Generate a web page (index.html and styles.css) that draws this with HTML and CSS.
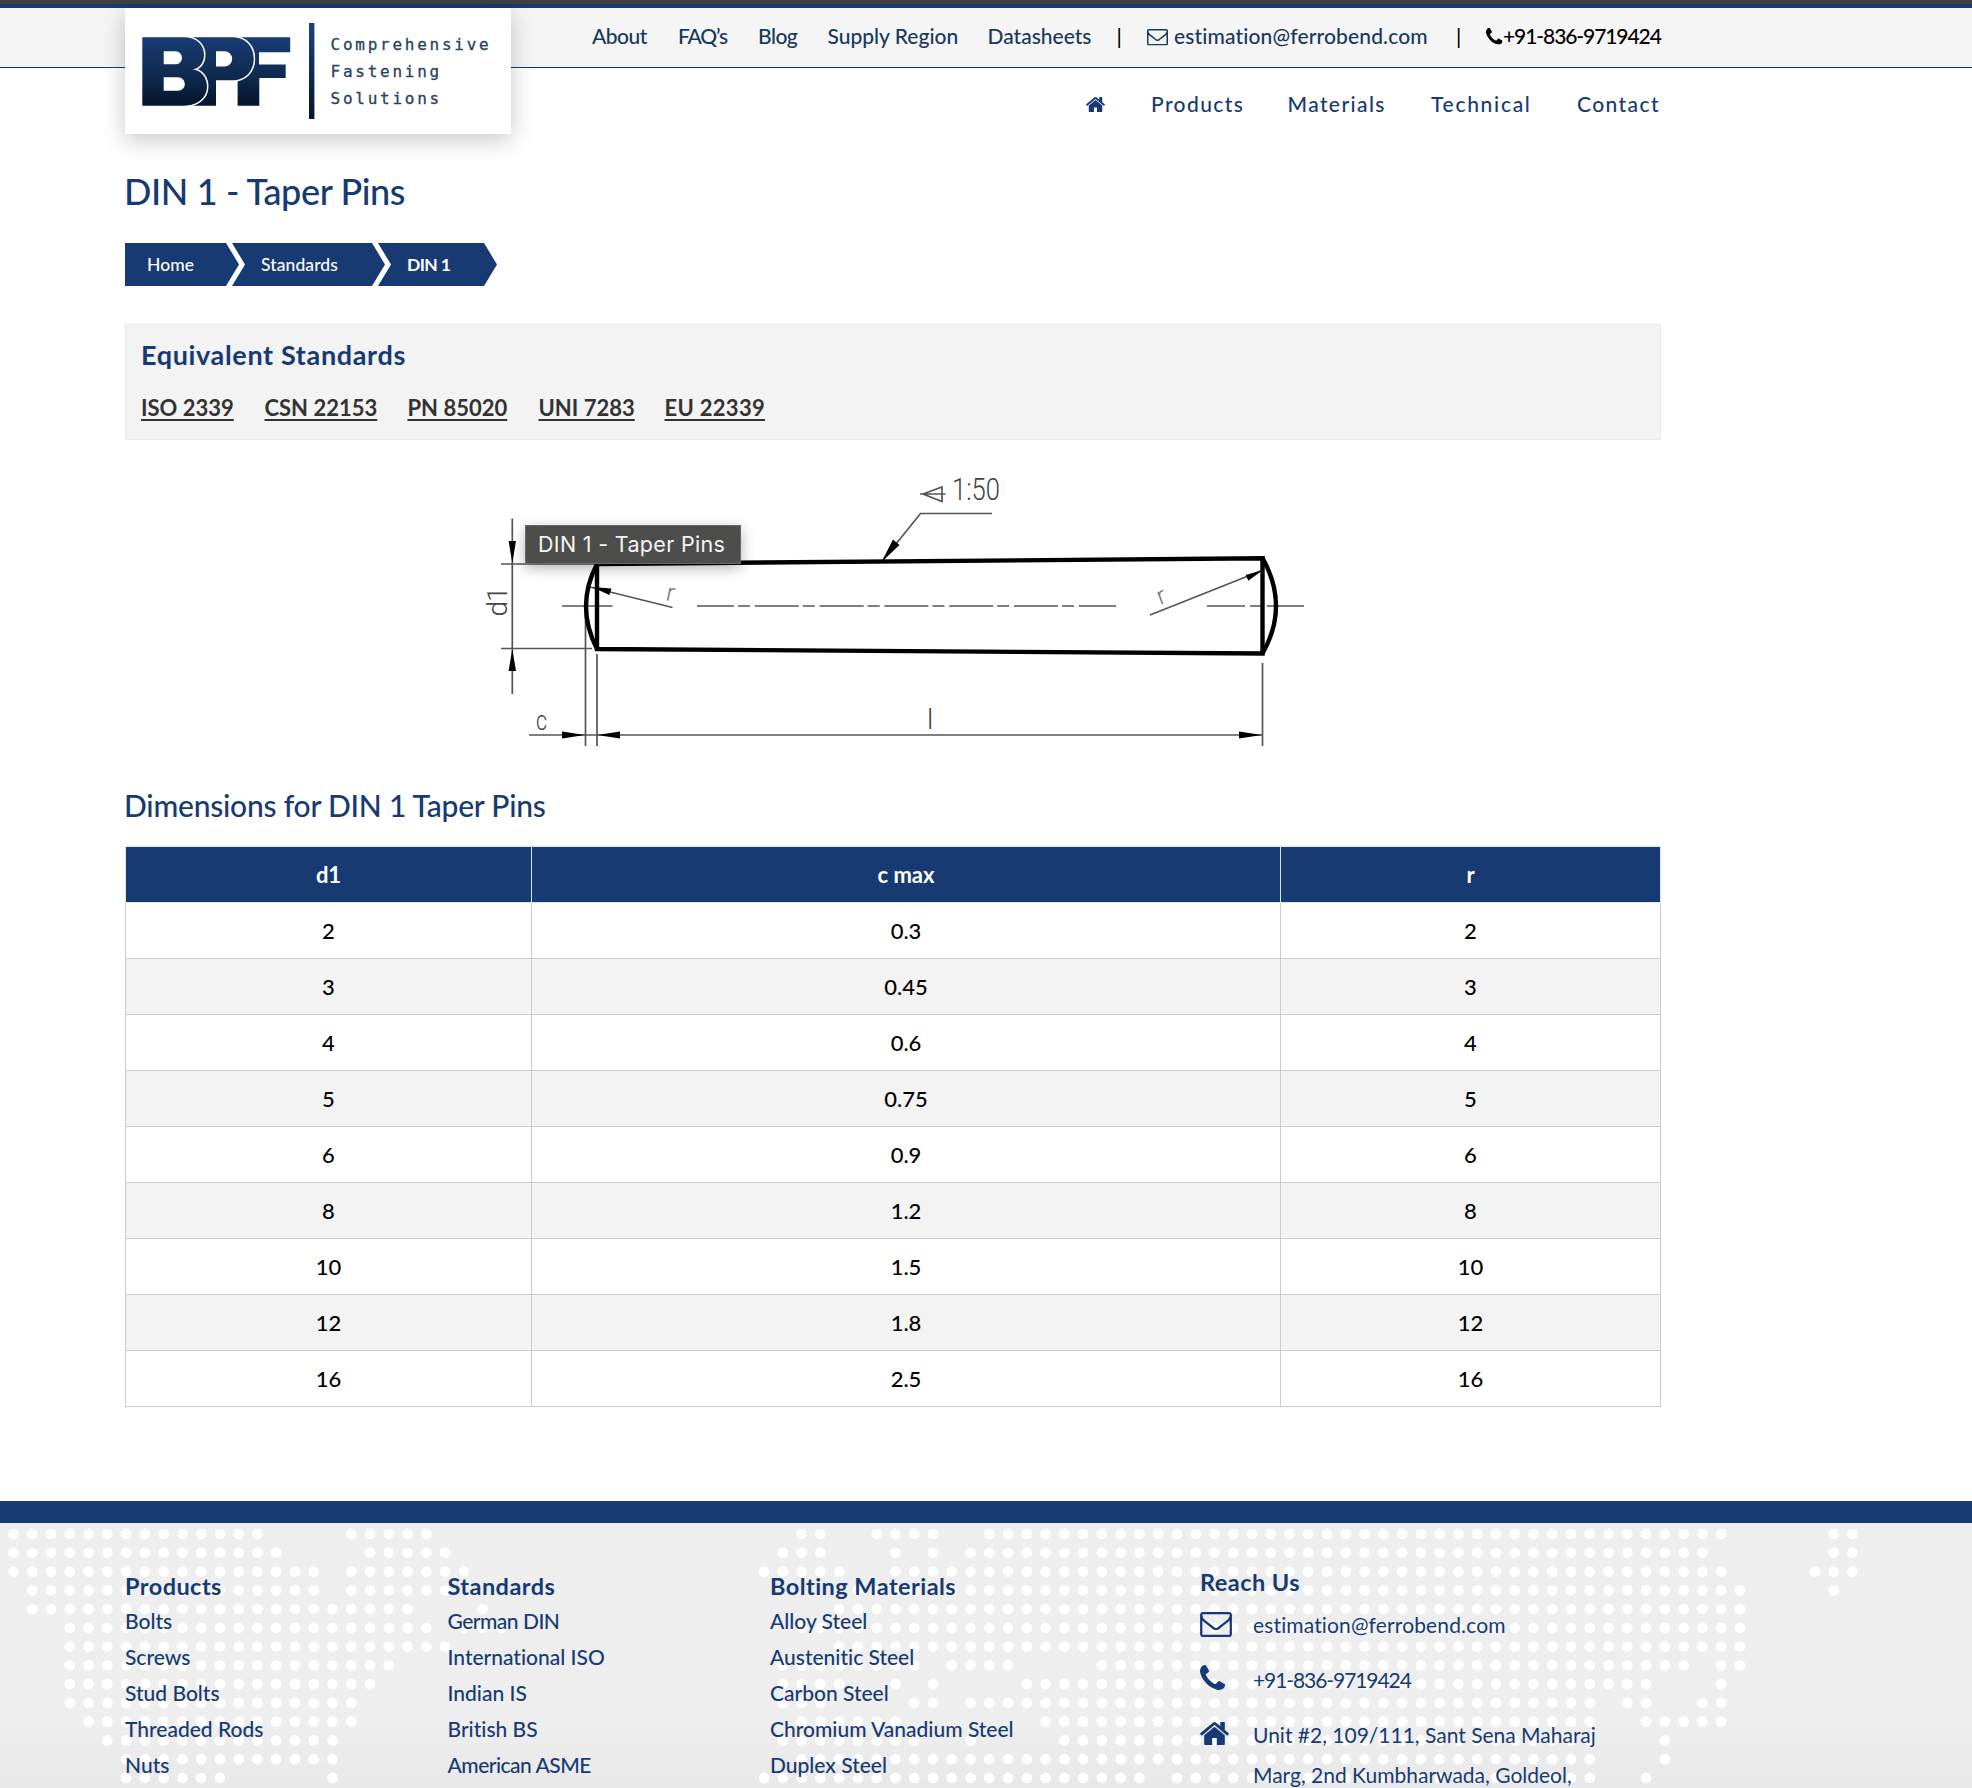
FILE: index.html
```
<!DOCTYPE html>
<html lang="en">
<head>
<meta charset="utf-8">
<title>DIN 1 - Taper Pins</title>
<link rel="stylesheet" href="styles.css">
</head>
<body>
<svg class="sprite" aria-hidden="true">
  <symbol id="i-home" viewBox="89 253 1614 1283"><path d="M1472 992v480q0 26-19 45t-45 19h-384v-384h-256v384h-384q-26 0-45-19t-19-45v-480q0-1 .5-3t.5-3l575-474 575 474q1 2 1 6zm223-69l-62 74q-8 9-21 11h-3q-13 0-21-7l-692-577-692 577q-12 8-24 7-13-2-21-11l-62-74q-8-10-7-23.5t11-21.5l719-599q32-26 76-26t76 26l244 204v-195q0-14 9-23t23-9h192q14 0 23 9t9 23v408l219 182q10 8 11 21.5t-7 23.5z"/></symbol>
  <symbol id="i-mail" viewBox="0 256 1792 1408"><path d="M1664 1504v-768q-32 36-69 66-268 206-426 338-51 43-83 67t-86.5 48.5-102.5 24.5h-2q-48 0-102.5-24.5t-86.5-48.5-83-67q-158-132-426-338-37-30-69-66v768q0 13 9.5 22.5t22.5 9.5h1472q13 0 22.5-9.5t9.5-22.5zm0-1051v-24.5l-.5-13-3-12.5-5.5-9-9-7.5-14-2.5h-1472q-13 0-22.5 9.5t-9.5 22.5q0 168 147 284 193 152 401 317 6 5 35 29.5t46 37.5 44.5 31.5 50.5 27.5 43 9h2q20 0 43-9t50.5-27.5 44.5-31.5 46-37.5 35-29.5q208-165 401-317 54-43 100.5-115.5t46.5-131.5zm128-37v1088q0 66-47 113t-113 47h-1472q-66 0-113-47t-47-113v-1088q0-66 47-113t113-47h1472q66 0 113 47t47 113z"/></symbol>
  <symbol id="i-phone" viewBox="192 128 1408 1408"><path d="M1600 1240q0 27-10 70.5t-21 68.5q-21 50-122 106-94 51-186 51-27 0-53-3.5t-57.5-12.5-47-14.5-55.5-20.5-49-18q-98-35-175-83-127-79-264-216t-216-264q-48-77-83-175-3-9-18-49t-20.5-55.5-14.5-47-12.5-57.5-3.5-53q0-92 51-186 56-101 106-122 25-11 68.5-21t70.5-10q14 0 21 3 18 6 53 76 11 19 30 54t35 63.5 31 53.5q3 4 17.5 25t21.5 35.5 7 28.5q0 20-28.5 50t-62 55-62 53-28.5 46q0 9 5 22.5t8.5 20.5 14 24 11.5 19q76 137 174 235t235 174q2 1 19 11.5t24 14 20.5 8.5 22.5 5q18 0 46-28.5t53-62 55-62 50-28.5q14 0 28.5 7t35.5 21.5 25 17.5q25 15 53.5 31t63.5 35 54 30q70 35 76 53 3 7 3 21z"/></symbol>
</svg>

<header class="site-header">
  <div class="topbar">
    <nav class="topnav">
      <a class="tight">About</a><a class="tighter">FAQ’s</a><a class="tight">Blog</a><a>Supply Region</a><a>Datasheets</a>
      <i>|</i>
      <svg class="top-mail"><use href="#i-mail"/></svg><a class="mail">estimation@ferrobend.com</a>
      <i>|</i>
      <svg class="top-phone"><use href="#i-phone"/></svg><a class="phone">+91-836-9719424</a>
    </nav>
  </div>
  <nav class="mainnav">
    <svg class="nav-home"><use href="#i-home"/></svg><a>Products</a><a>Materials</a><a class="wide">Technical</a><a>Contact</a>
  </nav>
  <a class="logo">
    <svg viewBox="0 0 386 126" width="386" height="126">
      <defs>
        <linearGradient id="ink" gradientUnits="userSpaceOnUse" x1="0" y1="29" x2="0" y2="98"><stop offset="0" stop-color="#173c73"/><stop offset=".5" stop-color="#112c54"/><stop offset="1" stop-color="#04152b"/></linearGradient>
        <linearGradient id="rule" gradientUnits="userSpaceOnUse" x1="0" y1="15" x2="0" y2="111"><stop offset="0" stop-color="#1d427c"/><stop offset="1" stop-color="#04152b"/></linearGradient>
      </defs>
      <g class="mark" fill="url(#ink)" fill-rule="evenodd">
        <path d="M114 29.3H165.2V44.3H134V56.5H160.7V70H134.3V97.7H112.6V60Z"/>
        <path d="M60 29.3H107C121 29.3 128.7 39 128.7 50.5C128.7 64 120 72.3 107 72.3H91V97.7H60ZM91 43.2H99.5A7.7 7.6 0 0 1 99.5 58.4H91Z"/>
        <path d="M17.3 29.3H59C72 29.3 79 37.5 79 46.5C79 54.5 75 60.3 67.5 61.2C77 62.5 82 70 82 78.5C82 90 72 97.7 59 97.7H17.3ZM38.7 43.3H50.5A6.6 6.5 0 0 1 50.500 56.3H38.7ZM38.7 69.3H53A6.9 6.7 0 0 1 53 82.7H38.7Z"/>
      </g>
      <rect x="184" y="15" width="5.4" height="96" fill="url(#rule)"/>
      <g class="tagline"><text x="205.5" y="42">Comprehensive</text><text x="205.5" y="69">Fastening</text><text x="205.5" y="96">Solutions</text></g>
    </svg>
  </a>
</header>

<main class="page">
  <h1>DIN 1 - Taper Pins</h1>
  <ol class="crumbs"><li>Home</li><li>Standards</li><li><b>DIN 1</b></li></ol>

  <section class="equiv">
    <h3>Equivalent Standards</h3>
    <p><a>ISO 2339</a><a>CSN 22153</a><a>PN 85020</a><a>UNI 7283</a><a class="eu">EU 22339</a></p>
  </section>

  <figure class="drawing">
    <svg viewBox="470 460 846 300" width="846" height="300">
      <g class="thin">
        <path d="M512.3 518.5V694M501 564H597M501 648.5H592M562 606H612.5M1207 606H1245M1250 606H1264M1267 606H1304"/>
        <path d="M697 606H1116" stroke-dasharray="44 4 12 4.8" stroke-dashoffset="7"/>
        <path d="M590 587L672.5 607.5M1150 615L1262 570.5M883 560L920.5 513.5H992"/>
        <path d="M920 494H945.5M942 487V501.500L923 494Z"/>
        <path d="M529 735H1262M585.5 606V746M597 654V746M1262.5 663V746"/>
      </g>
      <g class="outline">
        <path d="M597 564L1262.5 558.2V653.5L597 649Z"/>
        <path d="M597 564Q575 606 597 649M1262.5 558.2Q1289.5 606 1262.5 653.5"/>
      </g>
      <path class="tips" d="M512.3 563L508.6 541H516ZM512.3 649L508.6 671H516ZM592 587L611.5 588.5L609.3 595ZM1263 570L1245.7 575L1248.3 580.7ZM881.5 562L893 539.5L899.5 545ZM585 735L562 731.5V738.5ZM597 735L620 731.5V738.5ZM1262 735L1239 731.5V738.5Z"/>
      <g class="labels">
        <text class="dia" transform="translate(507 616.5) rotate(-90)">d<tspan dx="-1">1</tspan></text>
        <text x="952" y="500" textLength="48" lengthAdjust="spacingAndGlyphs" font-size="31">1:50</text>
        <text x="536" y="730" textLength="11" lengthAdjust="spacingAndGlyphs">c</text>
        <text x="927" y="729">l</text>
        <text class="soft" transform="translate(665 600) rotate(12)">r</text>
        <text class="soft" transform="translate(1160 605) rotate(-20)">r</text>
      </g>
    </svg>
    <div class="tip">DIN 1 - Taper Pins</div>
  </figure>

  <h2>Dimensions for DIN 1 Taper Pins</h2>
  <table class="dims">
    <colgroup><col class="c1"><col class="c2"><col class="c3"></colgroup>
    <thead><tr><th>d1</th><th>c max</th><th>r</th></tr></thead>
    <tbody>
      <tr><td>2</td><td>0.3</td><td>2</td></tr>
      <tr><td>3</td><td>0.45</td><td>3</td></tr>
      <tr><td>4</td><td>0.6</td><td>4</td></tr>
      <tr><td>5</td><td>0.75</td><td>5</td></tr>
      <tr><td>6</td><td>0.9</td><td>6</td></tr>
      <tr><td>8</td><td>1.2</td><td>8</td></tr>
      <tr><td>10</td><td>1.5</td><td>10</td></tr>
      <tr><td>12</td><td>1.8</td><td>12</td></tr>
      <tr><td>16</td><td>2.5</td><td>16</td></tr>
    </tbody>
  </table>
</main>

<footer class="site-footer">
  <svg class="map" width="1972" height="265" aria-hidden="true">
    <g transform="translate(13.5 11) scale(18.765)">
      <path d="M-1 0H13.01M18 0H22.01M42 0H43.01M46 0H49.01M52 0H91.01M97 0H98.01
        M-1 1H14.01M19 1H23.01M41 1H43.01M47 1H47.01M49 1H49.01M51 1H90.01M97 1H98.01
        M-1 2H16.01M18 2H24.01M40 2H44.01M47 2H91.01M96 2H98.01
        M1 3H16.01M18 3H23.01M45 3H92.01M97 3H97.01
        M1 4H21.01M25 4H25.01M44 4H92.01
        M3 5H22.01M24 5H26.01M42 5H92.01
        M3 6H23.01M44 6H92.01
        M3 7H20.01M41 7H48.01M50 7H53.01M58 7H89.01M91 7H92.01
        M3 8H19.01M41 8H44.01M47 8H47.01M49 8H49.01M54 8H87.01M91 8H91.01
        M3 9H18.01M41 9H43.01M48 9H49.01M51 9H84.01M86 9H87.01M90 9H91.01
        M4 10H18.01M42 10H47.01M55 10H84.01M87 10H91.01
        M5 11H17.01M41 11H48.01M51 11H51.01M56 11H84.01M88 11H88.01
        M6 12H17.01M42 12H84.01M88 12H88.01
        M6 13H11.01M17 13H17.01M40 13H60.01M62 13H84.01M87 13H87.01"/>
    </g>
  </svg>
  <div class="cols">
    <div class="col"><h4>Products</h4><a>Bolts</a><a>Screws</a><a>Stud Bolts</a><a>Threaded Rods</a><a>Nuts</a></div>
    <div class="col"><h4>Standards</h4><a class="tight">German DIN</a><a>International ISO</a><a>Indian IS</a><a>British BS</a><a class="tight">American ASME</a></div>
    <div class="col"><h4>Bolting Materials</h4><a>Alloy Steel</a><a>Austenitic Steel</a><a>Carbon Steel</a><a>Chromium Vanadium Steel</a><a>Duplex Steel</a></div>
    <div class="reach">
      <h4>Reach Us</h4>
      <div class="row"><svg class="f-mail"><use href="#i-mail"/></svg><span class="mail">estimation@ferrobend.com</span></div>
      <div class="row"><svg class="f-phone"><use href="#i-phone"/></svg><span class="phone">+91-836-9719424</span></div>
      <div class="row"><svg class="f-home"><use href="#i-home"/></svg><span class="addr">Unit #2, 109/111, Sant Sena Maharaj<br>Marg, 2nd Kumbharwada, Goldeol,</span></div>
    </div>
  </div>
</footer>
</body>
</html>
```
FILE: styles.css
```
* { box-sizing: border-box; }
body { margin: 0; width: 1972px; height: 1788px; overflow: hidden; background: #fff; color: #000; font: 500 21px/30px Lato, "Noto Sans", sans-serif; font-variant-ligatures: none; }
h1, h2, h3, h4, p, ol, figure { margin: 0; padding: 0; }
h1, h2, h3, h4 { color: #173a72; }
svg { display: block; fill: currentColor; }
.sprite { position: absolute; width: 0; height: 0; }
.tight { letter-spacing: -.5px; }
.tighter { letter-spacing: -1.1px; }
.mail { letter-spacing: .14px; }
.phone { letter-spacing: -1.08px; }

.site-header { position: relative; height: 144px; border-top: 4px solid #404040; }
.topbar { height: 64px; padding-left: 592px; background: #f5f5f5; border-top: 4px solid #173a72; border-bottom: 1px solid #173a72; }
.topnav { display: grid; grid-template-columns: 86px 80px 69.5px 160px 129px 30px 27.5px 282px 30px 17px 158px; padding-top: 13px; color: #17395c; white-space: nowrap; }
.topnav i { font-style: normal; color: #000; }
.topnav .phone, .top-phone { color: #000; }
.top-mail { width: 21px; height: 16.5px; margin-top: 8px; }
.top-phone { width: 16.5px; height: 16.5px; margin-top: 7px; }
.mainnav { display: grid; grid-template-columns: 65px 136.5px 143.5px 146px 84px; padding: 21px 0 0 1086px; color: #173a72; letter-spacing: 1.4px; }
.mainnav .wide { letter-spacing: 1.7px; }
.nav-home { width: 19px; height: 15px; margin-top: 8px; }

.logo { position: absolute; left: 125px; top: 4px; width: 386px; height: 126px; background: #fff; box-shadow: 0 6px 22px rgba(0, 0, 0, .22); }
.mark path { stroke: #fff; stroke-width: 3px; paint-order: stroke; }
.tagline { font: 400 16px "DejaVu Sans Mono", monospace; letter-spacing: 2.75px; fill: #29425f; stroke: #29425f; stroke-width: .3px; }

.page { width: 1536px; margin: 24px 0 0 125px; }
h1 { margin-left: -1px; font-size: 36px; line-height: 46px; font-weight: 500; letter-spacing: -.38px; }
.crumbs { display: flex; margin-top: 29px; list-style: none; color: #fff; font-size: 17.5px; line-height: 43px; letter-spacing: .1px; }
.crumbs li { height: 43px; width: 153px; padding-left: 29px; background: #173a72; clip-path: polygon(0 0, calc(100% - 13px) 0, 100% 50%, calc(100% - 13px) 100%, 0 100%, 13px 50%); }
.crumbs li:first-child { width: 114px; padding-left: 22px; clip-path: polygon(0 0, calc(100% - 13px) 0, 100% 50%, calc(100% - 13px) 100%, 0 100%); }
.crumbs li + li { margin-left: -7px; }
.crumbs li:last-child { width: 119px; letter-spacing: -.6px; }

.equiv { height: 116px; margin-top: 38px; padding: 12px 15px 0; background: #f3f3f3; border: 1px solid #ebebeb; }
.equiv h3 { font-size: 27px; line-height: 36px; font-weight: 700; letter-spacing: .65px; }
.equiv p { display: grid; grid-template-columns: 123.5px 143px 131px 126px 101px; margin-top: 20px; font-size: 22px; font-weight: 700; color: #333; white-space: nowrap; }
.equiv a { justify-self: start; text-decoration: underline; text-decoration-thickness: 2px; text-underline-offset: 3px; text-decoration-skip-ink: none; }
.equiv .eu { letter-spacing: .3px; }

.drawing { position: relative; margin: 20px auto 0; width: 846px; height: 300px; }
.thin { fill: none; stroke: #555; stroke-width: 1.7px; }
.outline { fill: none; stroke: #000; stroke-width: 4.4px; }
.tips { fill: #000; }
.labels { font: 300 28px Roboto, sans-serif; fill: #444; }
.labels .soft { fill: #777; font-size: 25px; }
.tip { position: absolute; left: 55px; top: 65px; width: 216px; height: 39px; padding-left: 12px; background: #4d4d4b; border: 1px solid #696969; box-shadow: 0 4px 14px rgba(0, 0, 0, .3); color: #f4f4f4; font: 400 21.5px/36px Inter, sans-serif; letter-spacing: .32px; white-space: nowrap; }

h2 { margin: 25px 0 0 -1px; font-size: 30px; line-height: 40px; font-weight: 500; letter-spacing: -.22px; }
.dims { width: 1536px; margin-top: 21px; border-collapse: collapse; table-layout: fixed; font-size: 22px; line-height: 30px; text-align: center; }
.c1 { width: 406px; }
.c2 { width: 749px; }
.dims tr { height: 56px; }
.dims th, .dims td { padding: 0; border: 1px solid #ccc; }
.dims th { background: #173a72; border-color: #e4e4e4; color: #fff; font-weight: 700; }
.dims tbody tr:nth-child(even) { background: #f3f3f3; }

.site-footer { position: relative; height: 287px; margin-top: 94px; border-top: 22px solid #173a72; background: linear-gradient(#eee 200px, #e8e8e8 265px); color: #173a72; }
.map { position: absolute; left: 0; top: 0; }
.map path { fill: none; stroke: #fff; stroke-width: .57; stroke-linecap: round; stroke-dasharray: 0 1; }
.cols { position: relative; display: grid; grid-template-columns: 322.5px 322.5px 430px 1fr; padding: 43px 0 0 125px; }
.col { display: flex; flex-direction: column; padding-top: 5px; line-height: 36px; white-space: nowrap; }
h4 { font-size: 23.5px; line-height: 30px; font-weight: 700; letter-spacing: .45px; }
.col h4 { height: 32px; }
.reach { padding-top: 1px; font-weight: 400; line-height: 40px; }
.reach h4 { margin-bottom: 8px; }
.row { display: grid; grid-template-columns: 53px 1fr; align-items: start; height: 55px; white-space: nowrap; }
.f-mail { width: 32px; height: 25px; margin-top: 7px; }
.f-phone { width: 25px; height: 25px; margin-top: 5px; }
.f-home { width: 29px; height: 23px; margin-top: 7px; }
```
